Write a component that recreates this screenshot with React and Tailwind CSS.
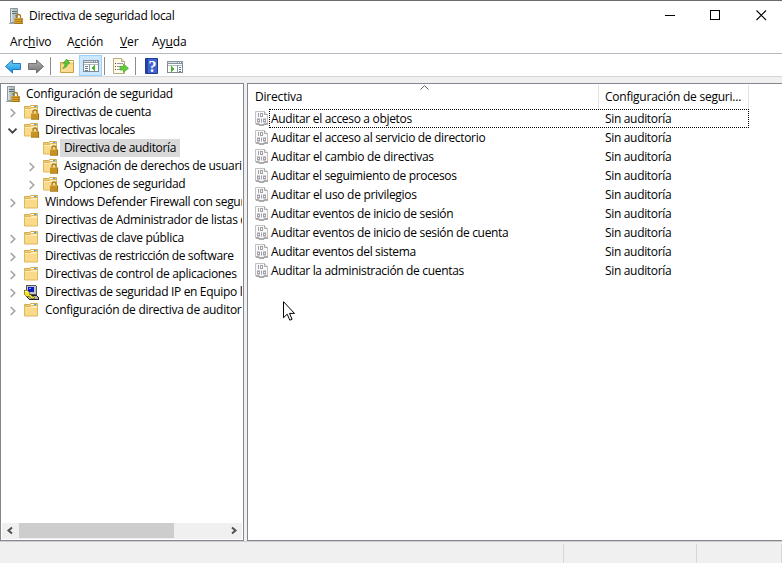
import React from "react";

function Lock({ x = 0, y = 0 }) {
  return (
    <g transform={`translate(${x} ${y})`}>
      <path d="M2 4V2.5a2 2 0 0 1 4 0V4" fill="none" stroke="#a37a25" strokeWidth="1.3" />
      <rect x="0" y="4" width="8" height="6" fill="#d9a32a" />
      <path d="M0 5.5h8M0 7.5h8" stroke="#a8781a" strokeWidth="0.8" />
      <path d="M0 9.6h8M7.6 4v6" stroke="#8f6411" strokeWidth="0.8" />
    </g>
  );
}

function ServerIcon() {
  return (
    <svg width="16" height="16" viewBox="0 0 16 16" className="block shrink-0">
      <path d="M1.500 .5h7v14h-7z" fill="#b4c0c6" stroke="#8a979d" />
      <path d="M2 1h1.500v13H2z" fill="#d9e1e4" />
      <path d="M3 3.5h5M3 5.5h5" stroke="#65747b" />
      <rect x="6" y="7" width="1.5" height="1.5" fill="#56c25a" />
      <path d="M0 15.5h8" stroke="#9aa5aa" />
      <Lock x={5.5} y={6} />
    </svg>
  );
}

function FolderIcon({ locked }) {
  return (
    <svg width="17" height="16" viewBox="0 0 17 16" className="block shrink-0">
      <path d="M1.5 4.5v-2h5l1-1h7v12h-13z" fill="#eccb72" stroke="#d4ac50" />
      <path d="M8 2h6v1.500H8z" fill="#fff" />
      <path d="M11 2h2.500v1h-2.500z" fill="#4c9bdd" />
      <path d="M1.500 4.500h6l1-1h6v10.500h-13z" fill="#f9da8b" stroke="#dfb75c" />
      <path d="M2 5h6l1-1h5v2H2z" fill="#fdeab4" />
      {locked && <Lock x={8} y={5.5} />}
    </svg>
  );
}

function ComputerIcon() {
  return (
    <svg width="17" height="16" viewBox="0 0 17 16" className="block shrink-0" shapeRendering="crispEdges">
      <path d="M4 1h7l2 1v8H5L3 8V2z" fill="#c4c4c4" stroke="#555" />
      <path d="M5 3h6v5H5z" fill="#0a1cc8" />
      <path d="M6 4h2v1H6z" fill="#7fa6ff" />
      <path d="M4 11h9l2 2v2H6l-3-3z" fill="#b5b5b5" stroke="#222" />
      <path d="M1 6h3l2 2v2l6 4-2 1-5-3H3L1 9z" fill="#f2e230" stroke="#6f6800" strokeWidth=".7" />
      <path d="M2 7h2v1H2z" fill="#fff" />
    </svg>
  );
}

function PolicyIcon() {
  return (
    <svg width="14" height="16" viewBox="0 0 14 16" className="block">
      <path d="M.5 .5h9l3 3v9.500h-3l-1 1h-4l-1-1h-3z" fill="#f8f8f8" stroke="#c2c2c2" />
      <path d="M9.500 .5v3h3" fill="#ececec" stroke="#a9a9a9" />
      <path d="M1 13h2.500l1 1h4l1-1H13" fill="none" stroke="#9c9c9c" strokeWidth="1.500" />
      <path d="M3.500 2v4M6.500 7.500v4" stroke="#a3a0aa" />
      <rect x="5.500" y="2.500" width="2" height="3" fill="none" stroke="#a3a0aa" />
      <rect x="2.500" y="8" width="2" height="3" fill="none" stroke="#a3a0aa" />
      <rect x="8.500" y="8" width="2" height="3" fill="none" stroke="#a3a0aa" />
    </svg>
  );
}

function Chevron({ open }) {
  return (
    <svg width="12" height="12" viewBox="0 0 12 12" className="block shrink-0">
      {open ? (
        <path d="M2.500 4.700 6.500 8.700l4-4" fill="none" stroke="#404040" strokeWidth="1.8" />
      ) : (
        <path d="m4.700 3 4 4-4 4" fill="none" stroke="#a6a6a6" strokeWidth="1.700" />
      )}
    </svg>
  );
}

function ArrowIcon({ forward }) {
  return (
    <svg width="16" height="15" viewBox="0 0 16 15" className="block">
      <defs>
        <linearGradient id="blueArrow" x1="0" y1="0" x2="0" y2="1">
          <stop offset="0" stopColor="#7fd6fb" />
          <stop offset="1" stopColor="#0a8fdc" />
        </linearGradient>
        <linearGradient id="grayArrow" x1="0" y1="0" x2="0" y2="1">
          <stop offset="0" stopColor="#b5b5b5" />
          <stop offset="1" stopColor="#707070" />
        </linearGradient>
      </defs>
      {forward ? (
        <path d="M15.5 7.5 8.5 1v3.5h-8v6h8V14z" fill="url(#grayArrow)" stroke="#686868" strokeWidth=".9" />
      ) : (
        <path d="M.5 7.5 7.5 1v3.5h8v6h-8V14z" fill="url(#blueArrow)" stroke="#1c6fb5" strokeWidth=".9" />
      )}
    </svg>
  );
}

function UpFolderIcon() {
  return (
    <svg width="16" height="16" viewBox="0 0 16 16" className="block">
      <path d="M1.500 4.500h6l1-2h6v12h-13z" fill="#f0cc74" stroke="#c79f45" />
      <path d="M10 3h4v1.5h-4z" fill="#fff" />
      <path d="M2 6.500h12v7.500H2z" fill="#fbdc90" />
      <path d="M3.200 10.500C7 9.500 8.500 7.500 8.500 5.200h2L7.200 1 3.600 5.200h2C5.500 7 4.700 9 3.200 10.500z" fill="#5cc536" stroke="#3b9420" strokeWidth=".6" transform="translate(.5 0)" />
    </svg>
  );
}

function PanelIcon({ right }) {
  return (
    <svg width="16" height="14" viewBox="0 0 16 14" className="block" shapeRendering="crispEdges">
      <path d="M.5 1.5h15v11H.5z" fill="#fff" stroke="#7e8b94" />
      <path d="M0 1h16v3H0z" fill="#8995a0" />
      <path d="M1 2h9v1H1z" fill="#d8dde1" />
      <path d="M11 2h1v1h-1zM13 2h1v1h-1z" fill="#fff" />
      <path d="M1 5.500h14" stroke="#b5bcc2" strokeWidth="1" />
      {right ? (
        <>
          <path d="M10.500 5v7" stroke="#8995a0" />
          <path d="M12 7.500h2M12 9.500h2M12 11.500h2" stroke="#5f7f9c" />
          <path d="M4 6v6l4-3z" fill="#4ab52d" />
        </>
      ) : (
        <>
          <path d="M6.500 5v7" stroke="#8995a0" />
          <path d="M2 7.500h3M2 9.500h3M2 11.500h3" stroke="#5f7f9c" />
          <path d="M12 6v6L8 9z" fill="#4ab52d" />
        </>
      )}
    </svg>
  );
}

function ExportIcon() {
  return (
    <svg width="17" height="16" viewBox="0 0 17 16" className="block">
      <path d="M1.5.5h8l3 3v12h-11z" fill="#fffbe6" stroke="#b9ab82" />
      <path d="M9.5.5v3h3" fill="#eee3bb" stroke="#b9ab82" />
      <path d="M3 5.5h1M3 8.5h1M3 11.5h1" stroke="#4d4d4d" />
      <path d="M5 5.5h6M5 8.5h5M5 11.5h5" stroke="#9b96b5" />
      <path d="M8 8.5h3.500V6l5 4.300-5 4.200V12H8z" fill="#63cc3d" stroke="#3f9e22" strokeWidth=".6" />
    </svg>
  );
}

function HelpIcon() {
  return (
    <svg width="13" height="16" viewBox="0 0 13 16" className="block">
      <path d="M.5.5h12v15H.5z" fill="#3f63cf" stroke="#21398f" />
      <path d="M1 1h2v14H1z" fill="#2744a5" />
      <text x="7.5" y="13.500" textAnchor="middle" className="font-['Liberation_Serif',serif] font-bold" fontSize="16" fill="#fff">?</text>
    </svg>
  );
}

const ICONS = {
  locked: <FolderIcon locked />,
  folder: <FolderIcon />,
  computer: <ComputerIcon />,
};

const TREE = [
  { label: "Directivas de cuenta", icon: "locked", arrow: "closed", track: "tracking-[-0.36px]" },
  { label: "Directivas locales", icon: "locked", arrow: "open", track: "tracking-[-0.34px]" },
  { label: "Directiva de auditoría", icon: "locked", nested: true, selected: true, track: "tracking-[-0.36px]" },
  { label: "Asignación de derechos de usuario", icon: "locked", arrow: "closed", nested: true, track: "tracking-[-0.31px]" },
  { label: "Opciones de seguridad", icon: "locked", arrow: "closed", nested: true, track: "tracking-[-0.34px]" },
  { label: "Windows Defender Firewall con seguridad avanzada", icon: "folder", arrow: "closed", track: "tracking-[-0.3px]" },
  { label: "Directivas de Administrador de listas de redes", icon: "folder", track: "tracking-[-0.32px]" },
  { label: "Directivas de clave pública", icon: "folder", arrow: "closed", track: "tracking-[-0.3px]" },
  { label: "Directivas de restricción de software", icon: "folder", arrow: "closed", track: "tracking-[-0.39px]" },
  { label: "Directivas de control de aplicaciones", icon: "folder", arrow: "closed", track: "tracking-[-0.32px]" },
  { label: "Directivas de seguridad IP en Equipo local", icon: "computer", arrow: "closed", track: "tracking-[-0.33px]" },
  { label: "Configuración de directiva de auditoría avanzada", icon: "folder", arrow: "closed", track: "tracking-[-0.29px]" },
];

const POLICIES = [
  { label: "Auditar el acceso a objetos", track: "tracking-[-0.32px]" },
  { label: "Auditar el acceso al servicio de directorio", track: "tracking-[-0.32px]" },
  { label: "Auditar el cambio de directivas", track: "tracking-[-0.3px]" },
  { label: "Auditar el seguimiento de procesos", track: "tracking-[-0.34px]" },
  { label: "Auditar el uso de privilegios", track: "tracking-[-0.3px]" },
  { label: "Auditar eventos de inicio de sesión", track: "tracking-[-0.34px]" },
  { label: "Auditar eventos de inicio de sesión de cuenta", track: "tracking-[-0.34px]" },
  { label: "Auditar eventos del sistema", track: "tracking-[-0.38px]" },
  { label: "Auditar la administración de cuentas", track: "tracking-[-0.33px]" },
];

function TreeRow({ item }) {
  return (
    <div className={`flex h-[18px] items-center ${item.nested ? "pl-6" : "pl-[5px]"}`}>
      <div className="w-[17px] shrink-0">
        {item.arrow && <Chevron open={item.arrow === "open"} />}
      </div>
      {ICONS[item.icon]}
      <span className={`ml-px flex h-[18px] items-center pr-1 pl-1 whitespace-nowrap ${item.track} ${item.selected ? "bg-[#d9d9d9]" : ""}`}>
        {item.label}
      </span>
    </div>
  );
}

function TitleBar() {
  return (
    <div className="flex h-[31px] items-center border-t border-[#6b6b6b] pl-[9px]">
      <ServerIcon />
      <span className="ml-1 flex-1 tracking-[-0.3px]">Directiva de seguridad local</span>
      <svg width="138" height="30" viewBox="0 0 138 30" className="block" fill="none" stroke="#000">
        <path d="M21 14.5h10M66.500 9.500h9v9h-9z" shapeRendering="crispEdges" />
        <path d="m112.500 9.500 9.500 9.500m0-9.500-9.500 9.500" strokeWidth="1.100" />
      </svg>
    </div>
  );
}

function MenuBar() {
  return (
    <div className="flex h-[22px] items-center pl-[10px] tracking-[-0.05px]">
      <span className="w-[57px]">Arc<u>h</u>ivo</span>
      <span className="w-[53px]">A<u>c</u>ción</span>
      <span className="w-8"><u>V</u>er</span>
      <span>Ay<u>u</u>da</span>
    </div>
  );
}

function Separator() {
  return <div className="h-[18px] w-px bg-[#8d8d8d]" />;
}

function ToolBar() {
  return (
    <div className="flex h-6 items-center border-t border-b border-t-[#b5bac3] border-b-[#d7d7d7] pt-px pl-[5px]">
      <div className="pt-px"><ArrowIcon /></div>
      <div className="ml-[7px] pt-px"><ArrowIcon forward /></div>
      <div className="ml-[6px]"><Separator /></div>
      <div className="ml-[8px] pt-px"><UpFolderIcon /></div>
      <div className="ml-[4px] flex h-[21px] w-[23px] items-center justify-center border border-[#99d1ff] bg-[#cce8ff] pt-px">
        <PanelIcon />
      </div>
      <div className="ml-[2px]"><Separator /></div>
      <div className="ml-[7px]"><ExportIcon /></div>
      <div className="ml-[6px]"><Separator /></div>
      <div className="ml-[9px]"><HelpIcon /></div>
      <div className="ml-[9px] pt-[2px]"><PanelIcon right /></div>
    </div>
  );
}

function TreePane() {
  return (
    <div className="flex w-[244px] flex-col border border-[#828790] bg-white">
      <div className="mr-px flex-1 overflow-hidden pt-px">
        <div className="flex h-[18px] items-center pl-[5px]">
          <ServerIcon />
          <span className="ml-1 tracking-[-0.27px]">Configuración de seguridad</span>
        </div>
        {TREE.map((item) => <TreeRow key={item.label} item={item} />)}
      </div>
      <div className="mx-px mb-px flex h-4 items-center bg-[#f0f0f0]">
        <svg width="17" height="16" viewBox="0 0 17 16" className="block">
          <path d="m10 4.500-3.500 3 3.500 3" fill="none" stroke="#505050" strokeWidth="2" />
        </svg>
        <div className="h-[15px] w-[155px] self-start bg-[#cdcdcd]" />
        <div className="flex-1" />
        <svg width="17" height="16" viewBox="0 0 17 16" className="block">
          <path d="m7 4.500 3.500 3-3.500 3" fill="none" stroke="#505050" strokeWidth="2" />
        </svg>
      </div>
    </div>
  );
}

function ListPane() {
  return (
    <div className="relative ml-[3px] flex-1 border border-r-0 border-[#828790] bg-white">
      <div className="flex h-[25px] pt-px">
        <div className="flex h-6 w-[351px] items-center border-r border-[#e2e2e2] pl-[7px] tracking-[-0.2px]">Directiva</div>
        <div className="flex h-6 w-[150px] items-center border-r border-[#e2e2e2] pl-[6px] tracking-[-0.23px] whitespace-nowrap">
          Configuración de seguri...
        </div>
      </div>
      {POLICIES.map((p, i) => (
        <div key={p.label} className="flex h-[19px] items-center pl-[7px]">
          <PolicyIcon />
          <div className={`flex h-[19px] w-[480px] items-center border ${i === 0 ? "border-dotted border-black" : "border-transparent"}`}>
            <span className={`w-[335px] pl-px whitespace-nowrap ${p.track}`}>{p.label}</span>
            <span className="tracking-[-0.33px] whitespace-nowrap">Sin auditoría</span>
          </div>
        </div>
      ))}
      <svg width="9" height="5" viewBox="0 0 9 5" className="absolute top-[1px] left-[172px]">
        <path d="M.5 4.500 4.500.700l4 3.800" fill="none" stroke="#606060" />
      </svg>
      <svg width="14" height="21" viewBox="0 0 14 21" className="absolute top-[217px] left-[35px]">
        <path d="M.5.700v16l3.700-3.500 2.600 6 2.300-1-2.600-5.800h5z" fill="#fff" stroke="#000" />
      </svg>
    </div>
  );
}

export default function App() {
  return (
    <div className="flex h-[563px] w-[782px] flex-col overflow-hidden bg-white font-['Open_Sans','Noto_Sans',sans-serif] text-[12px] leading-[18px] text-black">
      <TitleBar />
      <MenuBar />
      <ToolBar />
      <div className="flex h-[464px] bg-[#f0f0f0] pt-[6px]">
        <TreePane />
        <ListPane />
      </div>
      <div className="flex h-[22px] border-t border-[#d0d0d0] bg-[#f0f0f0] pt-[2px]">
        <div className="w-[564px] border-r border-[#d7d7d7]" />
        <div className="w-[133px] border-r border-[#d7d7d7]" />
        <div className="w-[85px] border-r border-[#d7d7d7]" />
      </div>
    </div>
  );
}
